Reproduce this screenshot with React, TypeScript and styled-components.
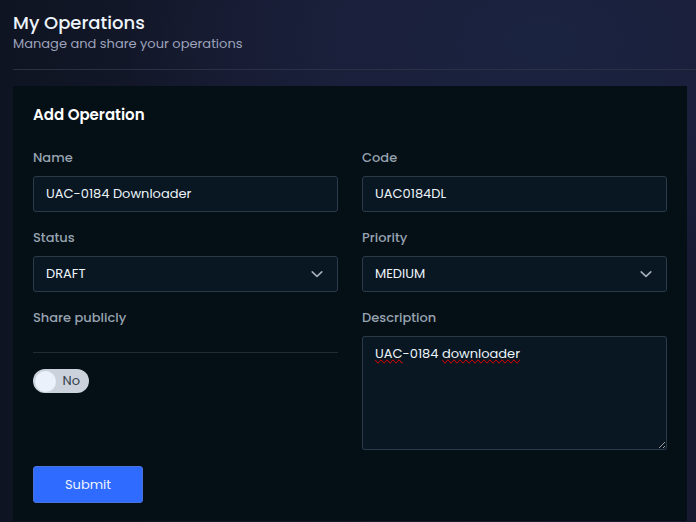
import React, { useState } from "react";
import styled, { createGlobalStyle } from "styled-components";

const GlobalStyle = createGlobalStyle`
  *, *::before, *::after { box-sizing: border-box; }
  body {
    margin: 0;
    background: #0d111c;
    color: #edf4fa;
    font-family: "Poppins", "Inter", sans-serif;
    font-size: 13px;
    line-height: 20px;
  }
  input, select, textarea, button { font: inherit; color: inherit; }
`;

const Page = styled.main`
  min-height: 100vh;
  padding-left: 13px;
  background:
    radial-gradient(ellipse 420px 260px at 78% 8%, #1a2340 0%, rgba(27, 33, 62, 0.8) 50%, rgba(27, 33, 64, 0) 100%),
    linear-gradient(90deg, #0f1422 0%, #15192d 34%, #181a30 70%, #171930 100%);
`;

const PageHeader = styled.header`
  padding: 11px 0 16px;
  border-bottom: 1px solid #2a3145;
`;

const PageTitle = styled.h1`
  margin: 0;
  font-size: 18px;
  font-weight: 500;
  line-height: 24px;
`;

const Subtitle = styled.p`
  margin: 0;
  font-size: 13px;
  line-height: 18px;
  color: #9da3bb;
`;

const Card = styled.section`
  margin: 16px 9px 0 0;
  padding: 16px 20px 18px;
  background: #040f16;
`;

const CardTitle = styled.h2`
  margin: 0 0 20px;
  font-size: 15px;
  font-weight: 600;
  line-height: 26px;
  color: #ffffff;
`;

const Fields = styled.div`
  display: grid;
  grid-template-columns: 1fr 1fr;
  gap: 16px 24px;
  align-items: start;
`;

const Field = styled.div`
  display: flex;
  flex-direction: column;
  gap: 8px;
`;

const Label = styled.label`
  font-weight: 500;
  color: #97a3b0;
`;

const controlFrame = `
  display: block;
  width: 100%;
  margin: 0;
  padding: 7px 12px;
  border: 1px solid #2b3b49;
  border-radius: 3px;
  outline: none;
`;

const TextInput = styled.input`
  ${controlFrame}
  height: 36px;
  background: #091723;
`;

const SelectBox = styled.div`
  position: relative;
`;

const Select = styled.select`
  ${controlFrame}
  height: 36px;
  appearance: none;
  background: #091723;
`;

const Chevron = styled.svg`
  position: absolute;
  top: 12px;
  right: 15px;
  width: 12px;
  height: 12px;
  pointer-events: none;
`;

const NotesBox = styled.div`
  position: relative;
  background: #091723;
`;

const Notes = styled.textarea`
  ${controlFrame}
  position: relative;
  height: 114px;
  background: transparent;
  color-scheme: dark;
  resize: vertical;
`;

const SpellingMarks = styled.div`
  ${controlFrame}
  position: absolute;
  inset: 0;
  border-color: transparent;
  color: transparent;
  white-space: pre-wrap;
  pointer-events: none;
`;

const Misspelled = styled.span`
  text-decoration-line: spelling-error;
`;

const ShareControl = styled.div`
  margin-top: 16px;
  padding-top: 16px;
  border-top: 1px solid #202b35;
`;

const Toggle = styled.label`
  display: flex;
  align-items: center;
  justify-content: space-between;
  width: 56px;
  height: 24px;
  padding: 0 9px 0 2px;
  border-radius: 12px;
  background: #cbd2dc;
  color: #333d49;
  cursor: pointer;

  &:has(input:checked) {
    flex-direction: row-reverse;
    padding: 0 2px 0 9px;
    background: #2f6bff;
    color: #ffffff;
  }
`;

const ToggleKnob = styled.input`
  appearance: none;
  width: 21px;
  height: 21px;
  margin: 0;
  border-radius: 50%;
  background: #ebf1fb;
`;

const SubmitButton = styled.button`
  display: block;
  min-width: 110px;
  height: 37px;
  margin-top: 16px;
  padding: 0 24px;
  border: 1px solid #4b72e0;
  border-radius: 3px;
  background: #2f6bff;
  color: #eef3ff;
  cursor: pointer;
`;

function SelectField({ id, label, options }: { id: string; label: string; options: string[] }) {
  return (
    <Field>
      <Label htmlFor={id}>{label}</Label>
      <SelectBox>
        <Select id={id} defaultValue={options[0]}>
          {options.map((option) => (
            <option key={option}>{option}</option>
          ))}
        </Select>
        <Chevron viewBox="0 0 12 12" fill="none" stroke="#a5afba" strokeWidth="1.6" strokeLinecap="round" strokeLinejoin="round" aria-hidden="true">
          <path d="M1.200 3.800 6 8.400l4.800-4.600" />
        </Chevron>
      </SelectBox>
    </Field>
  );
}

const knownWords = new Set(["0184"]);

export default function App() {
  const [shared, setShared] = useState(false);
  const [description, setDescription] = useState("UAC-0184 downloader");

  return (
    <>
      <GlobalStyle />
      <Page>
        <PageHeader>
          <PageTitle>My Operations</PageTitle>
          <Subtitle>Manage and share your operations</Subtitle>
        </PageHeader>
        <Card>
          <CardTitle>Add Operation</CardTitle>
          <form onSubmit={(event) => event.preventDefault()}>
            <Fields>
              <Field>
                <Label htmlFor="name">Name</Label>
                <TextInput id="name" defaultValue="UAC-0184 Downloader" />
              </Field>
              <Field>
                <Label htmlFor="code">Code</Label>
                <TextInput id="code" defaultValue="UAC0184DL" />
              </Field>
              <SelectField id="status" label="Status" options={["DRAFT"]} />
              <SelectField id="priority" label="Priority" options={["MEDIUM"]} />
              <Field>
                <Label htmlFor="share">Share publicly</Label>
                <ShareControl>
                  <Toggle>
                    <ToggleKnob id="share" type="checkbox" checked={shared} onChange={(event) => setShared(event.target.checked)} />
                    {shared ? "Yes" : "No"}
                  </Toggle>
                </ShareControl>
              </Field>
              <Field>
                <Label htmlFor="description">Description</Label>
                <NotesBox>
                  <SpellingMarks aria-hidden="true">
                    {description.split(/(\w+)/).map((part, index) =>
                      /\w/.test(part) && !knownWords.has(part) ? <Misspelled key={index}>{part}</Misspelled> : part
                    )}
                  </SpellingMarks>
                  <Notes id="description" spellCheck={false} value={description} onChange={(event) => setDescription(event.target.value)} />
                </NotesBox>
              </Field>
            </Fields>
            <SubmitButton type="submit">Submit</SubmitButton>
          </form>
        </Card>
      </Page>
    </>
  );
}
